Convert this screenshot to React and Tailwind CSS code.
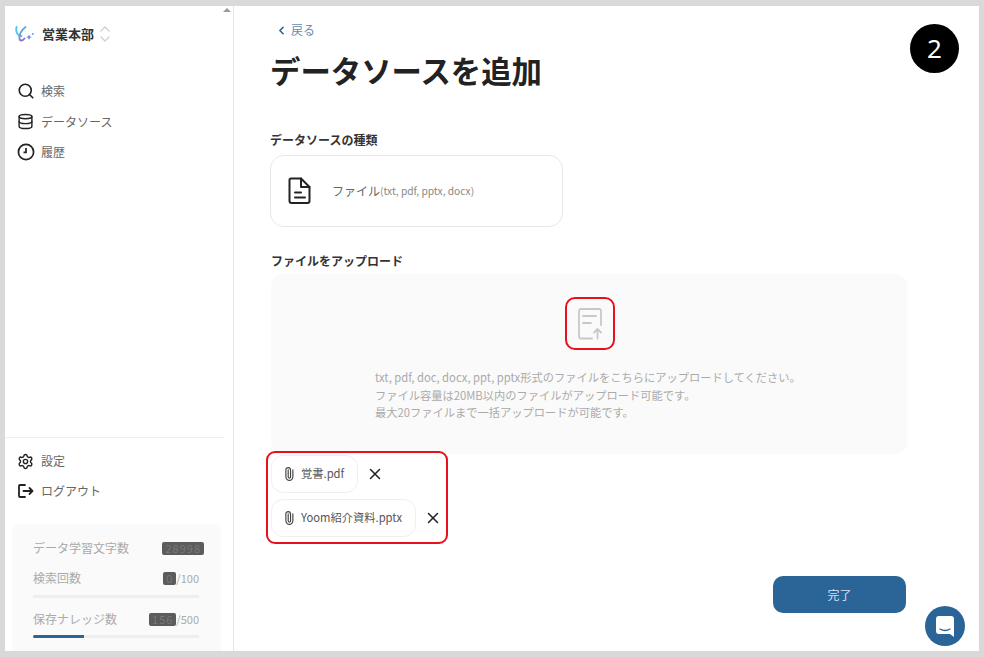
import { ChevronLeft, Search, Database, Settings, X, Paperclip } from 'lucide-react'

const NavItem = ({ icon, label }) => (
  <div className="flex items-center h-[30.5px] pl-[12px]">
    <span className="w-[24px] flex items-center">{icon}</span>
    <span className="text-[12px] text-[#666]">{label}</span>
  </div>
)

const Bar = ({ pct }) => (
  <div className="h-[3px] rounded-full bg-[#eceeef] overflow-hidden">
    <div className="h-full bg-[#2b6497]" style={{ width: `${pct}%` }} />
  </div>
)

const Masked = ({ children }) => (
  <span className="bg-[#5c5c5c] text-[#777] text-[11px] leading-[13px] tracking-[1px] px-[3px] rounded-[2px]">{children}</span>
)

const Chip = ({ name }) => (
  <div className="h-[38px] flex items-center gap-[5px] pl-[10px] pr-[13px] rounded-[12px] border border-[#efefef] bg-white">
    <Paperclip size={14} strokeWidth={2} className="text-[#444] -rotate-45" />
    <span className="text-[11.25px] text-[#555]">{name}</span>
  </div>
)

const App = () => {
  return (
    <div className="w-[984px] h-[657px] bg-[#d9d9d9] pt-[6px] pb-[6px] pl-[5px] pr-[5px] font-['Noto_Sans_CJK_JP','Noto_Sans',sans-serif]">
      <div className="relative h-full flex bg-white">
        <aside className="relative w-[229px] shrink-0 h-full flex flex-col border-r border-[#e6e6e6]">
          <span className="absolute right-[2px] top-[2px] w-0 h-0 border-x-[4px] border-x-transparent border-b-[4px] border-b-[#9a9a9a]" />
          <div className="flex items-center h-[20px] mt-[18px] pl-[10px]">
            <svg width="22" height="18" viewBox="0 0 22 18" fill="none" strokeLinecap="round">
              <defs>
                <linearGradient id="logoStroke" x1="0" y1="0" x2="0.4" y2="1">
                  <stop offset="0" stopColor="#54c6e4" />
                  <stop offset="1" stopColor="#8a6fe0" />
                </linearGradient>
              </defs>
              <path d="M1.500 2C0.500 7 2.500 11 6.500 11" stroke="#54c6e4" strokeWidth="1.900" />
              <path d="M10.500 2C6.500 5 3.500 10 4.500 14c0.500 2 3 2 5-0.500" stroke="url(#logoStroke)" strokeWidth="1.900" />
              <path d="M14 9.500l0.900 1.800 1.800 0.900-1.800 0.900-0.900 1.800-0.900-1.800-1.800-0.900 1.800-0.900z" fill="#6f8fe6" />
              <circle cx="17.800" cy="9" r="0.900" fill="#6f8fe6" />
            </svg>
            <span className="ml-[5px] text-[13px] font-bold text-[#333]">営業本部</span>
            <svg width="12" height="18" viewBox="0 0 12 18" fill="none" stroke="#d0d0d0" strokeWidth="1.300" className="ml-[5px]">
              <path d="M1.500 6.500L6 2l4.500 4.500" />
              <path d="M1.500 11.500L6 16l4.500-4.500" />
            </svg>
          </div>

          <nav className="mt-[32px] flex flex-col">
            <NavItem icon={<Search size={18} strokeWidth={2.200} className="text-[#222]" />} label="検索" />
            <NavItem icon={<Database size={17} strokeWidth={2} className="text-[#222]" />} label="データソース" />
            <NavItem
              icon={
                <svg width="18" height="18" viewBox="0 0 18 18" fill="none" stroke="#222" strokeWidth="1.700">
                  <circle cx="9" cy="9" r="7.600" />
                  <path d="M9 5v4.400H6.500" />
                </svg>
              }
              label="履歴"
            />
          </nav>

          <div className="mt-auto w-[219px] border-t border-[#efefef] pt-[8px]">
            <NavItem icon={<Settings size={17} strokeWidth={2} className="text-[#222]" />} label="設定" />
            <div className="-mt-[1px]">
              <NavItem
                icon={
                  <svg width="17" height="16" viewBox="0 0 17 16" fill="none" stroke="#222" strokeWidth="1.800" strokeLinecap="round" strokeLinejoin="round">
                    <path d="M8 2H3a1 1 0 0 0-1 1v10a1 1 0 0 0 1 1h5" />
                    <path d="M6.500 8H15.500M12.500 5l3 3-3 3" />
                  </svg>
                }
                label="ログアウト"
              />
            </div>
          </div>

          <div className="mt-[18px] ml-[7px] w-[209px] h-[127px] rounded-t-[8px] bg-[#fafafa] pl-[21px] pr-[22px] pt-[15px] text-[#aaa] text-[12px]">
            <div className="flex items-center justify-between h-[18px] -mr-[5px]">
              <span>データ学習文字数</span>
              <Masked>28998</Masked>
            </div>
            <div className="flex items-center justify-between h-[18px] mt-[12px]">
              <span>検索回数</span>
              <span className="text-[11px] flex items-center"><Masked>0</Masked>/100</span>
            </div>
            <div className="mt-[8px]"><Bar pct={0} /></div>
            <div className="flex items-center justify-between h-[18px] mt-[12px]">
              <span>保存ナレッジ数</span>
              <span className="text-[11px] flex items-center"><Masked>156</Masked>/500</span>
            </div>
            <div className="mt-[7px]"><Bar pct={31} /></div>
          </div>
        </aside>

        <main className="flex-1 pl-[36px] min-w-0">
          <div className="flex items-center h-[16px] mt-[16px] text-[12px] text-[#6b8bab]">
            <ChevronLeft size={13} strokeWidth={3} className="text-[#2b6497] ml-[5px]" />
            <span className="ml-[3px]">戻る</span>
          </div>
          <h1 className="mt-[10px] text-[30.400px] leading-[44px] font-bold text-[#222]">データソースを追加</h1>

          <div className="mt-[39px] text-[12px] leading-[18px] font-bold text-[#333]">データソースの種類</div>
          <div className="mt-[6px] w-[293px] h-[72px] rounded-[14px] border border-[#e8e8e8] flex items-center pl-[17px]">
            <svg width="24" height="28" viewBox="0 0 24 28" fill="none" stroke="#222" strokeWidth="2" strokeLinejoin="round" strokeLinecap="round">
              <path d="M3 1.500h10l8.500 8.500V24a2 2 0 0 1-2 2H3.500a2 2 0 0 1-2-2V3a1.500 1.500 0 0 1 1.500-1.500z" />
              <path d="M13 1.500V10h8.500" />
              <path d="M7 15.500h6M7 20.500h10" />
            </svg>
            <span className="ml-[20px] text-[12px] text-[#666]">ファイル</span>
            <span className="text-[10.200px] text-[#888]">(txt, pdf, pptx, docx)</span>
          </div>

          <div className="mt-[25px] ml-[1px] text-[12px] leading-[18px] font-bold text-[#333]">ファイルをアップロード</div>
          <div className="mt-[4px] ml-[1px] w-[636px] h-[180px] rounded-[12px] bg-[#fafafa] flex flex-col items-center pt-[23px]">
            <div className="ml-[2px] w-[50px] h-[53px] rounded-[10px] border-[2.500px] border-[#e8101c] flex items-center justify-center">
              <svg width="24" height="32" viewBox="0 0 24 32" fill="none" stroke="#c8c8c8" strokeWidth="1.800" strokeLinecap="round" strokeLinejoin="round">
                <path d="M14 30.500H3a2 2 0 0 1-2-2V3a2 2 0 0 1 2-2h18a2 2 0 0 1 2 2v14" />
                <path d="M5 8h13M5 15h8" />
                <path d="M19.500 30.500V21M16 24.500l3.500-3.500 3.500 3.500" />
              </svg>
            </div>
            <div className="mt-[19px] ml-[2px] w-[430px] text-[11.250px] leading-[17.500px] text-[#aaa]">
              <p>txt, pdf, doc, docx, ppt, pptx形式のファイルをこちらにアップロードしてください。</p>
              <p>ファイル容量は20MB以内のファイルがアップロード可能です。</p>
              <p>最大20ファイルまで一括アップロードが可能です。</p>
            </div>
          </div>

          <div className="mt-[-3px] ml-[-4px] w-[182px] h-[93px] rounded-[9px] border-[2.500px] border-[#e8101c] pl-[3px] pt-[1.500px] flex flex-col gap-[6px]">
            <div className="flex items-center">
              <Chip name="覚書.pdf" />
              <X size={18} strokeWidth={2} className="text-[#222] ml-[8px]" />
            </div>
            <div className="flex items-center">
              <Chip name="Yoom紹介資料.pptx" />
              <X size={18} strokeWidth={2} className="text-[#222] ml-[8px]" />
            </div>
          </div>

          <div className="mt-[32px] w-[635px] ml-[1px] flex justify-end">
            <button className="w-[133px] h-[37px] rounded-[10px] bg-[#2b6497] text-[12px] text-[#d5e2ee]">完了</button>
          </div>
        </main>

        <div className="absolute right-[20px] top-[18px] w-[49px] h-[49px] rounded-full bg-black flex items-center justify-center text-white text-[26px] font-['Noto_Sans',sans-serif]">2</div>
        <div className="absolute right-[14px] bottom-[5px] w-[40px] h-[40px] rounded-full bg-[#2b6497] flex items-center justify-center">
          <svg width="18" height="21" viewBox="0 0 18 21" fill="none">
            <path d="M3 0h12a3 3 0 0 1 3 3v18l-4-3H3a3 3 0 0 1-3-3V3a3 3 0 0 1 3-3z" fill="#fff" />
            <path d="M4 13c3 1.800 7 1.800 10 0" stroke="#2b6497" strokeWidth="1.300" strokeLinecap="round" />
          </svg>
        </div>
      </div>
    </div>
  )
}

export default App
